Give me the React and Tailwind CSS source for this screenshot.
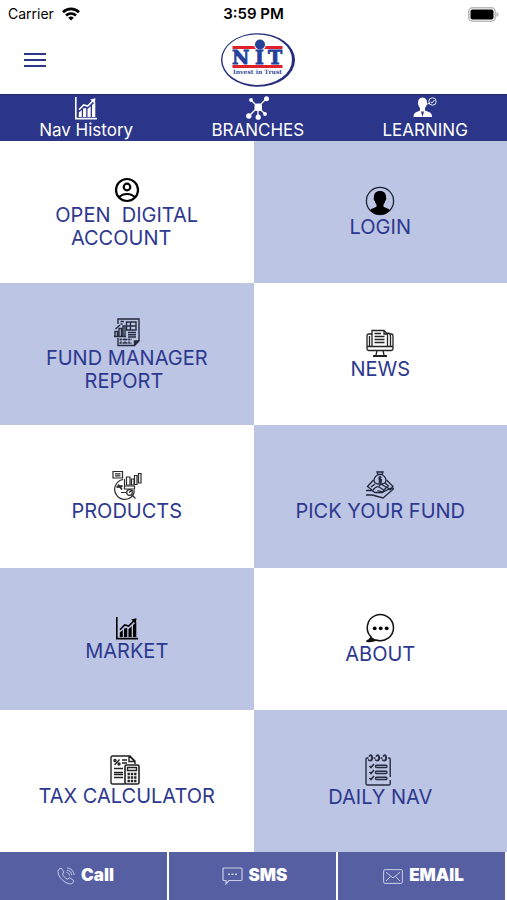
import React from 'react';
import clsx from 'clsx';

const WifiIcon = () => (
  <svg viewBox="0 0 18 14" className="h-[14px] w-[18px]" fill="none" stroke="#000" strokeWidth="2.7">
    <path d="M1 5.2a11.4 11.4 0 0 1 16 0" />
    <path d="M4 8.5a7.2 7.2 0 0 1 10 0" />
    <path d="M9 13.6 6.2 10.8a4 4 0 0 1 5.6 0z" fill="#000" stroke="none" />
  </svg>
);

const BatteryIcon = () => (
  <svg viewBox="0 0 31 15" className="h-[15px] w-[31px]">
    <rect x="0.8" y="0.8" width="26.4" height="13.4" rx="4" fill="#fff" stroke="#b9b9b9" strokeWidth="1.6" />
    <rect x="2.5" y="2.5" width="23" height="10" rx="2" fill="#000" />
    <path d="M28.4 5v5c1.6-.5 2.2-1.4 2.2-2.5s-.6-2-2.2-2.5z" fill="#b9b9b9" />
  </svg>
);

const Logo = () => (
  <svg viewBox="0 0 74 54" className="h-[54px] w-[74px]" role="img" aria-label="NIT Invest in Trust">
    <ellipse cx="37" cy="27" rx="37" ry="26.8" fill="#272f7c" />
    <ellipse cx="36.2" cy="26.7" rx="34.8" ry="25.3" fill="#fff" />
    <path d="M11.5 13h50v3h-50zM11.5 32h50v3h-50z" fill="#e0202b" />
    <circle cx="39" cy="11.5" r="6" fill="#fff" />
    <circle cx="39" cy="11.5" r="5" fill="#24419a" />
    <text
      x="11 34 47"
      y="31"
      fontFamily="'DejaVu Serif', serif"
      fontWeight="700"
      fontSize="19"
      fill="#24419a"
      stroke="#24419a"
      strokeWidth="0.8"
    >
      NIT
    </text>
    <text
      x="36.5"
      y="41"
      textAnchor="middle"
      fontFamily="'DejaVu Serif', serif"
      fontWeight="700"
      fontSize="6"
      fill="#33499a"
    >
      Invest in Trust
    </text>
  </svg>
);

const ChartIcon = () => (
  <svg viewBox="0 0 24 24" className="h-6 w-6" fill="currentColor">
    <path d="M1 1h1.6v20.8H23v1.6H1z" />
    <path d="M4.8 16.5 7.8 14v7h-3zM9 12.500l3.200-.5v9H9zM13.500 13l3.200-2.800V21h-3.200zM18 9l3.300-3V21H18z" />
    <path d="M5 13.800 9.700 9l4 1L19 4.800" fill="none" stroke="currentColor" strokeWidth="1.6" />
    <path d="m16.200 3.500 5.300-1.300-.8 5.500z" />
  </svg>
);

const BranchesIcon = () => (
  <svg viewBox="0 0 24 24" className="h-6 w-6" fill="currentColor">
    <path d="M12 11 5 4M12 11l8.500-8.500M12 11l-9 9M12 11v10M12 11l7 7" stroke="currentColor" strokeWidth="1.3" />
    <rect x="8.500" y="7.500" width="7.500" height="7.500" rx="2.500" />
    <circle cx="5" cy="4" r="1.9" />
    <circle cx="20.500" cy="2.800" r="2.5" />
    <circle cx="2.800" cy="20" r="2.7" />
    <circle cx="12.200" cy="21.200" r="2.6" />
    <circle cx="19" cy="18" r="1.9" />
  </svg>
);

const LearningIcon = () => (
  <svg viewBox="0 0 24 24" className="h-6 w-6" fill="currentColor">
    <path d="M9.500 1.500c3 0 4.500 2.200 4.500 5.200 0 2.300-1 4.200-2 5.200v2.500l4.500 1.800c1.800.8 2.500 2.500 2.500 4.800H.5c0-2.300.8-4 2.500-4.800l4-1.800v-2.500c-1.100-1-2-2.900-2-5.200 0-3 1.500-5.200 4.500-5.200z" />
    <path d="m8 15.500 1.500 5.500 1.500-5.500z" fill="#2b358a" />
    <circle cx="19.500" cy="5.500" r="3.700" fill="none" stroke="currentColor" strokeWidth="0.9" />
    <path d="M13 8.500 17 7M17.500 6l1.500 1 2.500-3" fill="none" stroke="currentColor" strokeWidth="0.9" />
  </svg>
);

const AccountIcon = () => (
  <svg viewBox="0 0 26 28" className="h-7 w-[26px]" fill="none" stroke="#000" strokeWidth="2.2">
    <circle cx="13" cy="14" r="11" />
    <circle cx="13" cy="11" r="3.3" />
    <path d="M5 21.500c2-2.500 5-3.500 8-3.500s6 1 8 3.500" />
  </svg>
);

const LoginIcon = () => (
  <svg viewBox="0 0 30 30" className="h-[30px] w-[30px]">
    <circle cx="15" cy="15" r="13.6" fill="none" stroke="#1d2233" strokeWidth="1.3" />
    <path
      d="M15 5c4.200 0 6.300 2.600 6 6.500.8.600.2 3-.8 3.500-.3 1.600-.9 2.600-1.700 3.400v2.400c2 1.300 5 1.700 6.700 3.400A13.500 13.500 0 0 1 15 28.400 13.500 13.500 0 0 1 4.800 24.200c1.700-1.700 4.700-2.100 6.700-3.400v-2.400c-.8-.8-1.400-1.800-1.700-3.400-1-.5-1.600-2.900-.8-3.500C8.700 7.600 10.800 5 15 5z"
      fill="#000"
    />
  </svg>
);

const ReportIcon = () => (
  <svg viewBox="0 0 30 30" className="h-[30px] w-[30px]" fill="none" stroke="#252a3c" strokeWidth="1.4">
    <path d="M6 7V2h21v22l-4.500 4.500H6V21" />
    <path d="M22.500 28.500V24H27" fill="#252a3c" />
    <path d="M3 19.500v-5h2.500v5M7 19.500v-8h2.500v8M11 19.500V9h2v10.500M2 19.500h12M3.500 12 8 8M8.500 4.500H12M8.500 7h2" />
    <path d="M14.500 5h9.500v8h-9.500zM18.500 5v8M14.500 9H24M16 15.500h8M16 17.700h8M16 20h8" />
    <path d="M7.500 22.500H20M7.500 26H20M9 21.500v6M13 21.500v6M17 21.500v6" strokeDasharray="2 1" />
  </svg>
);

const NewsIcon = () => (
  <svg viewBox="0 0 30 30" className="h-[30px] w-[30px]" fill="none" stroke="#222" strokeWidth="1.3">
    <path d="M7 6H4Q2 6 2 8v12q0 2.500 2 2.500h22q2 0 2-2.500V8q0-2-2-2h-1M2 18.500h26M12 22.500 11 27M18 22.500l1 4.500" />
    <path d="M8 28h14" strokeWidth="2" />
    <path d="M7 18.500v-16h12l3.500 3.500v12.500M19 2.500V6h3.500M22.500 5q3 0 3 3v10.500M4.500 18.500V8" />
    <path d="M9.500 5.500H16M9.500 8.500h10M9.500 11.500h10M9.500 14.500h10" />
  </svg>
);

const ProductsIcon = () => (
  <svg viewBox="0 0 30 30" className="h-[30px] w-[30px]" fill="none" stroke="#2a2a2a" strokeWidth="1.2">
    <path d="M1 1.500h9.500v6.500H1zM3 3.800h5.500M3 5.800h5.500" />
    <path d="M11 9.500A10 10 0 1 0 22 23v-3" />
    <path d="M12.500 9v10h10v-3M12.500 16h10" />
    <path d="M14.500 7h3.500v8h-3.500zM19.500 9H22v6h-2.500zM22.500 5.500H25v9h-2.500zM26.500 3.500H29v9.500h-2.500z" />
    <path d="m4.500 17 6-1M6 14.500l4 5" strokeWidth="1.8" />
    <circle cx="17.500" cy="22.500" r="2.800" />
    <path d="m19.500 24.500 4 4M9 22.500h5.500M17 22.500l3.500-2.500" />
  </svg>
);

const FundIcon = () => (
  <svg viewBox="0 0 30 30" className="h-[30px] w-[30px]" fill="none" stroke="#20263a" strokeWidth="1.3">
    <path d="M13 4.500 12 2h6l-1 2.500zM13 4.500c-3 2-4 4-4 6 0 2.500 2 3.500 6 3.500s6-1 6-3.500c0-2-1-4-4-6" />
    <path d="M16.500 7.500h-2.300v2.200h2v2.300h-2.600M15 6v7" strokeWidth="1.4" />
    <path d="m8.500 10-6 6.500 5 4M21.500 10l6.500 6.500-3 3.500M6 17l4-3M24 16.500 20 13" />
    <path d="M8 20c2-2.500 4-4 6-3l4 2.500c1.500 1 .5 2.500-1 2.300L12.500 20.500M18.500 20.500l3.500-3.500 3 3M14 16l2-2 5 3" />
    <path d="M1 20.500h6l3 2h7l8-4q2.500-1 3.500.5L18 28l-9-2.500-2-.5H1" />
  </svg>
);

const AboutIcon = () => (
  <svg viewBox="0 0 30 30" className="h-[30px] w-[30px]">
    <path
      d="M6.200 24A13.100 13.100 0 1 1 11 27c-2.500 1.300-6 1.600-9.500 1.200 2.300-.8 4-2 4.700-4.200z"
      fill="none"
      stroke="#111"
      strokeWidth="1.5"
    />
    <path d="M2 28.200c2.300-.8 3.800-2 4.400-4.200L11 27c-2.500 1.300-5.600 1.500-9 1.200z" fill="#111" />
    <circle cx="9.700" cy="15.300" r="1.9" />
    <circle cx="15.700" cy="15.300" r="1.9" />
    <circle cx="21.700" cy="15.300" r="1.9" />
  </svg>
);

const TaxIcon = () => (
  <svg viewBox="0 0 34 30" className="h-[30px] w-[34px]" fill="none" stroke="#222" strokeWidth="1.4">
    <path d="M15 29H2.500Q1 29 1 27.500V2.500Q1 1 2.500 1H20l5 5v3M19 1v5.500h6M19 1l6 5.500" />
    <path d="m4.500 10 5-5.500" />
    <circle cx="5" cy="5.500" r="1" />
    <circle cx="9" cy="9" r="1" />
    <path d="M12 5h5M12 8h5M4 13.500h9M4 17.500h9M4 19.500h9M4 22.500h9" strokeWidth="1.5" />
    <rect x="15" y="10" width="14" height="19" rx="1.5" fill="#fff" strokeWidth="1.6" />
    <path d="M17.500 12.500h9v3h-9z" />
    <path d="M17.500 19h9M17.500 22.500h9M17.500 26h9" strokeWidth="2.4" strokeDasharray="2.4 0.9" />
  </svg>
);

const DailyIcon = () => (
  <svg viewBox="0 0 30 32" className="h-8 w-[30px]" fill="none" stroke="#262b40" strokeWidth="1.4">
    <path d="M3.500 4H2Q1 4 1 5.500v24Q1 31 2.500 31H24q1.200 0 1.200-1.500V26M25.200 23V5.500Q25.200 4 24 4h-1" />
    <path d="M8.500 4h2M15.500 4h2" />
    <path d="M4 2.500Q6.500-.5 7 3t-1.500 3.500T4 5.500M11 2.500q2.500-3 3 .5t-1.500 3.500T11 5.500M18 2.500q2.500-3 3 .5t-1.500 3.500T18 5.500" strokeWidth="1.9" />
    <path d="m4.500 12 1.500 1.500 3-3.500M4.500 18 6 19.500 9 16M4.500 24 6 25.500 9 22" strokeWidth="1.6" />
    <rect x="10.500" y="11.300" width="11.500" height="2.200" rx="1" />
    <rect x="10.500" y="17.300" width="11.500" height="2.200" rx="1" />
    <rect x="10.500" y="23.300" width="11.500" height="2.200" rx="1" />
  </svg>
);

const CallIcon = () => (
  <svg viewBox="0 0 18 18" className="h-[18px] w-[18px]" fill="none" stroke="currentColor" strokeWidth="1">
    <path d="M2 2.200 4 1l3 4-1.500 2c.8 2.300 2.800 4.300 5.200 5.300l1.900-1.600 4 2.800c.3 1.500-1.300 3.500-3.100 3.500C7.500 16.500 1 10 1 4.500c0-.9.300-1.700 1-2.300z" />
    <path d="M9.500 5.500c1.700.2 2.800 1.300 3 3M9.800 3.200c2.900.2 4.700 2.200 5 5M10.200 1c4 .3 6.500 3 6.800 7" />
  </svg>
);

const SmsIcon = () => (
  <svg viewBox="0 0 21 18" className="h-[18px] w-[21px]" fill="none" stroke="currentColor" strokeWidth="1.2">
    <path d="M2 1h17q1 0 1 1v10.500q0 1-1 1H7L4 16.800v-3.300H2q-1 0-1-1V2q0-1 1-1z" />
    <path d="M6 7.300h2M9.500 7.300h2M13 7.300h2" strokeWidth="1.6" />
  </svg>
);

const EmailIcon = () => (
  <svg viewBox="0 0 20 15" className="h-[15px] w-5" fill="none" stroke="currentColor" strokeWidth="1">
    <rect x="0.6" y="0.6" width="18.800" height="13.800" rx="1.5" />
    <path d="M3 3.200 10 9l7-5.800M3 12l4.500-4.500M17 12l-4.500-4.500" />
  </svg>
);

const navItems = [
  { label: 'Nav History', icon: ChartIcon },
  { label: 'BRANCHES', icon: BranchesIcon },
  { label: 'LEARNING', icon: LearningIcon },
];

const tiles = [
  { lines: ['OPEN\u00a0 DIGITAL', 'ACCOUNT\u00a0\u00a0'], icon: AccountIcon },
  { lines: ['LOGIN'], icon: LoginIcon, shaded: true },
  { lines: ['FUND MANAGER', 'REPORT\u00a0'], icon: ReportIcon, shaded: true },
  { lines: ['NEWS'], icon: NewsIcon },
  { lines: ['PRODUCTS'], icon: ProductsIcon },
  { lines: ['PICK YOUR FUND'], icon: FundIcon, shaded: true },
  { lines: ['MARKET'], icon: ChartIcon, shaded: true },
  { lines: ['ABOUT'], icon: AboutIcon },
  { lines: ['TAX CALCULATOR'], icon: TaxIcon },
  { lines: ['DAILY NAV'], icon: DailyIcon, shaded: true },
];

const contacts = [
  { label: 'Call', icon: CallIcon },
  { label: 'SMS', icon: SmsIcon },
  { label: 'EMAIL', icon: EmailIcon },
];

const StatusBar = () => (
  <div className="grid h-7 grid-cols-3 items-center px-2 text-sm text-black">
    <div className="flex items-center gap-2">
      <span>Carrier</span>
      <WifiIcon />
    </div>
    <span className="text-center text-[15px] font-semibold">3:59 PM</span>
    <div className="flex justify-end">
      <BatteryIcon />
    </div>
  </div>
);

const Header = () => (
  <header className="grid h-[66px] grid-cols-3 items-center px-6 pb-[3px]">
    <button type="button" aria-label="Menu" className="flex w-[22px] flex-col gap-1">
      <span className="h-[2px] w-full bg-[#2b358a]" />
      <span className="h-[2px] w-full bg-[#2b358a]" />
      <span className="h-[2px] w-full bg-[#2b358a]" />
    </button>
    <div className="flex justify-center pl-2">
      <Logo />
    </div>
  </header>
);

const App = () => {
  return (
    <div className="flex min-h-screen flex-col bg-white font-['Inter',sans-serif]">
      <StatusBar />
      <Header />

      <nav className="flex h-[47px] justify-around border-t border-[#1f2766] bg-[#2b358a] text-white">
        {navItems.map(({ label, icon: Icon }) => (
          <a key={label} href="#" className="flex flex-col items-center pt-px">
            <Icon />
            <span className="text-[17px] leading-5">{label}</span>
          </a>
        ))}
      </nav>

      <main className="grid flex-1 auto-rows-fr grid-cols-2">
        {tiles.map(({ lines, icon: Icon, shaded }) => (
          <a
            key={lines[0]}
            href="#"
            className={clsx(
              'flex flex-col items-center justify-center pt-px text-xl leading-[23px] text-[#2d388f]',
              shaded ? 'bg-[#bcc5e3]' : 'bg-white'
            )}
          >
            <span className="text-black">
              <Icon />
            </span>
            {lines.map((line) => (
              <span key={line}>{line}</span>
            ))}
          </a>
        ))}
      </main>

      <footer className="grid h-12 grid-cols-3">
        {contacts.map(({ label, icon: Icon }) => (
          <button
            key={label}
            type="button"
            className="flex items-center justify-center gap-1.5 border-r-2 border-white bg-[#575fa3] pl-1 text-[17px] font-black text-white"
          >
            <span className="text-[#c9cdea]">
              <Icon />
            </span>
            {label}
          </button>
        ))}
      </footer>
    </div>
  );
};

export default App;
